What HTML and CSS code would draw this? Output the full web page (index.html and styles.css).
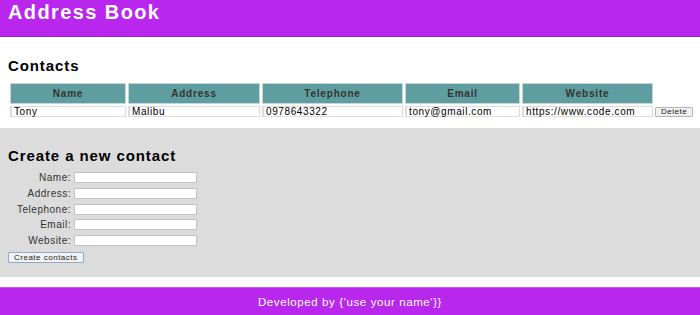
FILE: index.html
```html
<!DOCTYPE html>
<html lang="en">
<head>
  <meta charset="UTF-8">
  <meta name="viewport" content="width=device-width, initial-scale=1.0">
  <title>Address Book</title>
  <link rel="stylesheet" href="styles.css">
</head>
<body>
  <header class="topbar">
    <h1>Address Book</h1>
  </header>

  <section class="contacts">
    <h2>Contacts</h2>
    <table class="contact-table">
      <thead>
        <tr>
          <th class="col-name">Name</th>
          <th class="col-address">Address</th>
          <th class="col-phone">Telephone</th>
          <th class="col-email">Email</th>
          <th class="col-site">Website</th>
        </tr>
      </thead>
      <tbody>
        <tr>
          <td>Tony</td>
          <td>Malibu</td>
          <td>0978643322</td>
          <td>tony@gmail.com</td>
          <td>https://www.code.com</td>
          <td class="col-action"><button class="delete-btn">Delete</button></td>
        </tr>
      </tbody>
    </table>
  </section>

  <!-- new contact form -->
  <section class="create">
    <h2>Create a new contact</h2>
    <form class="contact-form">
      <div class="form-grid">
        <label for="name">Name:</label>
        <input id="name" type="text">
        <label for="address">Address:</label>
        <input id="address" type="text">
        <label for="phone">Telephone:</label>
        <input id="phone" type="text">
        <label for="email">Email:</label>
        <input id="email" type="text">
        <label for="website">Website:</label>
        <input id="website" type="text">
      </div>
      <button type="button" class="create-btn">Create contacts</button>
    </form>
  </section>

  <footer class="footer">Developed by {'use your name'}}</footer>
</body>
</html>
```

FILE: styles.css
```css
body {
  margin: 0;
  font-family: "Liberation Sans", Arial, sans-serif;
  color: #000;
  background: #fff;
}

.topbar {
  background: #b927ef;
  height: 37px;
  box-sizing: border-box;
  padding: 0 8px;
  border-bottom: 1px solid #a31fd6;
}

.topbar h1 {
  margin: 0;
  color: #fff;
  font-size: 20px;
  line-height: 25px;
  letter-spacing: 1.4px;
}

h2 {
  margin: 0;
  font-size: 15px;
  line-height: 18px;
  letter-spacing: 0.9px;
}

.contacts {
  padding: 20px 0 9px 8px;
}

.contact-table {
  margin-top: 6px;
  border-spacing: 2px;
}

.contact-table th {
  box-sizing: border-box;
  height: 21px;
  padding: 0;
  background: #5f9ea0;
  border: 1px solid #c9d6d6;
  color: #333;
  font-size: 10px;
  letter-spacing: 0.8px;
}

.col-name { width: 116px; }
.col-address { width: 132px; }
.col-phone { width: 141px; }
.col-email { width: 115px; }
.col-site { width: 131px; }

.contact-table td {
  box-sizing: border-box;
  height: 11px;
  padding: 0 2px;
  border: 1px solid #dcdcdc;
  border-left-width: 2px;
  font-size: 10px;
  line-height: 9px;
  letter-spacing: 0.6px;
  white-space: nowrap;
}

.contact-table td.col-action {
  border: none;
  padding: 0;
  width: 36px;
}

.delete-btn {
  font-family: inherit;
  font-size: 8px;
  line-height: 8px;
  letter-spacing: 0.5px;
  padding: 0 5px;
  background: #efefef;
  border: 1px solid #b5b5b5;
  border-radius: 1px;
  color: #222;
}

.create {
  background: #dcdcdc;
  padding: 19px 8px 13px;
}

.form-grid {
  display: grid;
  grid-template-columns: 63px 123px;
  grid-auto-rows: 11px;
  column-gap: 3px;
  row-gap: 4.75px;
  margin-top: 7px;
}

.form-grid label {
  text-align: right;
  font-size: 10px;
  line-height: 11px;
  letter-spacing: 0.5px;
  color: #333;
}

.form-grid input {
  box-sizing: border-box;
  height: 11px;
  margin: 0;
  padding: 0 2px;
  border: 1px solid #c2c2c2;
  border-radius: 1px;
  background: #fff;
}

.create-btn {
  margin-top: 5px;
  font-family: inherit;
  font-size: 8px;
  line-height: 9px;
  letter-spacing: 0.5px;
  padding: 0 5px;
  background: #f2f2f2;
  border: 1px solid #8fa9d4;
  border-radius: 1px;
  color: #222;
}

.footer {
  margin-top: 10px;
  background: #b927ef;
  border-top: 1px solid #c955f2;
  color: #fff;
  text-align: center;
  font-size: 11.5px;
  line-height: 29px;
  letter-spacing: 0.6px;
}
```
